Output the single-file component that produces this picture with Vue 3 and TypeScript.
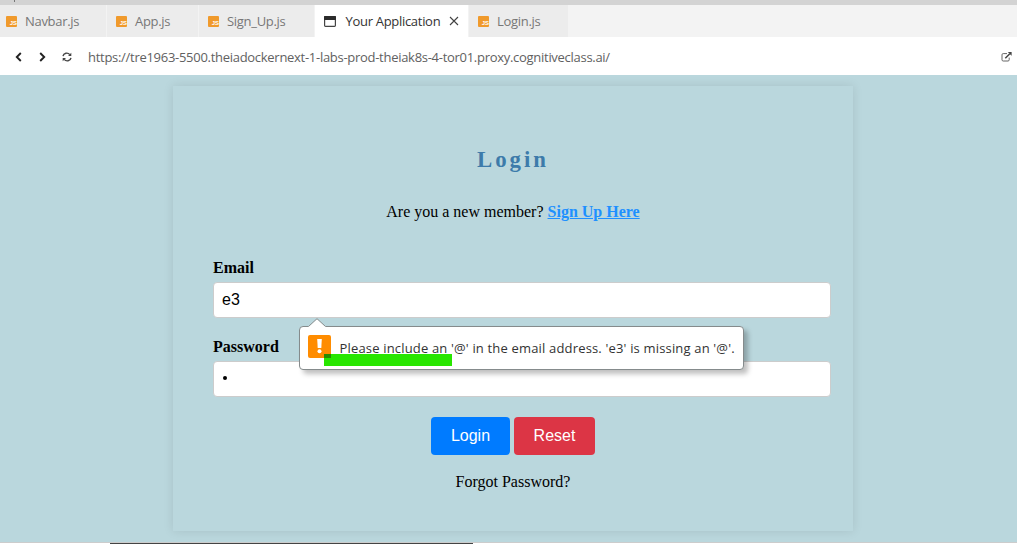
<script setup lang="ts">
import { ref } from 'vue'

interface Tab {
  name: string
  width: number
  active?: boolean
}

const tabs: Tab[] = [
  { name: 'Navbar.js', width: 107 },
  { name: 'App.js', width: 92 },
  { name: 'Sign_Up.js', width: 116 },
  { name: 'Your Application', width: 154, active: true },
  { name: 'Login.js', width: 100 },
]
const url = 'https://tre1963-5500.theiadockernext-1-labs-prod-theiak8s-4-tor01.proxy.cognitiveclass.ai/'
const email = ref('e3')
</script>

<template>
  <div class="window">
    <div class="strip"><i class="tick"></i></div>
    <div class="tabs">
      <div v-for="t in tabs" :key="t.name" class="tab" :class="{ active: t.active }" :style="{ width: t.width + 'px' }">
        <svg v-if="t.active" class="winicon" width="12" height="11" viewBox="0 0 12 11">
          <rect x=".6" y=".6" width="10.8" height="9.8" rx=".8" fill="#fff" stroke="#444" stroke-width="1.2" />
          <rect x="0" y="0" width="12" height="4" rx=".8" fill="#2b2b2b" />
        </svg>
        <span v-else class="js">JS</span>
        <span class="name">{{ t.name }}</span>
        <svg v-if="t.active" class="close" width="10" height="10" viewBox="0 0 10 10">
          <path d="M1 1L9 9M9 1L1 9" stroke="#424242" stroke-width="1.1" fill="none" />
        </svg>
      </div>
    </div>
    <div class="toolbar">
      <svg class="back" width="7" height="10" viewBox="0 0 7 10"><path d="M5.8 1L1.8 5L5.8 9" fill="none" stroke="#222" stroke-width="1.9" /></svg>
      <svg class="fwd" width="7" height="10" viewBox="0 0 7 10"><path d="M1.2 1L5.2 5L1.2 9" fill="none" stroke="#222" stroke-width="1.9" /></svg>
      <svg class="reload" width="10" height="10" viewBox="0 0 10 10">
        <path d="M1 4.2C1.6 .8 5.8 .2 7.8 2.6M9 5.8C8.4 9.2 4.2 9.8 2.2 7.4" fill="none" stroke="#444" stroke-width="1.4" />
        <path d="M9.3 .8V4.1H6ZM.7 9.2V5.9H4Z" fill="#444" />
      </svg>
      <span class="url">{{ url }}</span>
      <svg class="open" width="11" height="10" viewBox="0 0 11 10">
        <path d="M6 1.6H2.2Q1 1.6 1 2.8V7.8Q1 9 2.2 9H7Q8.2 9 8.2 7.8V5.6" fill="none" stroke="#666" stroke-width="1" />
        <path d="M4.3 6.2L8.8 1.8" stroke="#444" stroke-width="1.5" />
        <path d="M6.8 0H10.6V3.8Z" fill="#444" />
      </svg>
    </div>
    <main class="page">
      <form class="card" novalidate @submit.prevent>
        <h2>Login</h2>
        <p class="member">Are you a new member? <a href="#">Sign Up Here</a></p>
        <label for="email">Email</label>
        <div class="field">
          <input id="email" v-model="email" type="text" />
          <div class="popup">
            <svg class="arrow" width="18" height="9" viewBox="0 0 18 9">
              <path d="M0 9L9 .7L18 9Z" fill="#fff" />
              <path d="M.5 8.5L9 .7L17.5 8.5" fill="none" stroke="#858b8c" />
            </svg>
            <span class="warn"><svg width="23" height="23" viewBox="0 0 23 23"><path d="M9.2 4H13.8L13.3 13H9.7Z" fill="#fff" /><circle cx="11.5" cy="16.2" r="2" fill="#fff" /></svg></span>
            <i class="marker"></i>
            <span class="message">Please include an '@' in the email address. 'e3' is missing an '@'.</span>
          </div>
        </div>
        <label for="password">Password</label>
        <div class="field"><div id="password" class="input" tabindex="0"><i class="dot"></i></div></div>
        <div class="buttons">
          <button class="login" type="submit">Login</button>
          <button class="reset" type="reset">Reset</button>
        </div>
        <p class="forgot">Forgot Password?</p>
      </form>
    </main>
    <div class="bottom"><i></i></div>
  </div>
</template>

<style>
html, body { background: #fff; overflow: hidden; }
</style>

<style scoped>
* { box-sizing: border-box; }
.window { width: 1017px; height: 547px; display: flex; flex-direction: column; overflow: hidden; background: #fff; }
.strip { height: 5px; flex: none; background: #d3d3d3; }
.tick { display: block; width: 1px; height: 2px; margin-left: 14px; background: #777; }
.tabs { height: 32px; flex: none; display: flex; background: #f3f3f3; }
.tab { height: 32px; flex: none; display: flex; align-items: center; padding-left: 6px; background: #ececec; border-right: 1px solid #f3f3f3; color: #777; font: 13px/20px "Open Sans", "Noto Sans", sans-serif; }
.tab + .tab { padding-left: 9px; }
.tab.active { background: #fff; color: #333; }
.js { width: 11px; height: 11px; flex: none; margin-top: 1px; border-radius: 1px; background: #f09a2c; color: #fff; font: bold 6px/15px "Liberation Sans", Arial, sans-serif; text-align: right; }
.name { margin-left: 8px; letter-spacing: -.3px; white-space: nowrap; }
.active .name { margin-left: 9.5px; }
.winicon, .close { flex: none; }
.close { margin-left: 8.5px; }
.toolbar { height: 38px; flex: none; display: flex; align-items: center; padding: 2px 5px 0 15px; background: #fff; }
.toolbar svg { flex: none; }
.fwd { margin-left: 17px; }
.reload { margin-left: 16px; }
.url { margin-left: 16px; color: #616161; font: 13px/20px "Open Sans", "Noto Sans", sans-serif; letter-spacing: -.285px; white-space: nowrap; }
.open { margin-left: auto; }
.page { height: 467px; flex: none; padding-top: 11px; background: #bad7dd; overflow: hidden; }
.card { width: 680px; height: 445px; margin-left: 173px; padding: 60px 40px 0; display: flex; flex-direction: column; box-shadow: 0 0 10px rgba(0, 0, 0, .1); color: #000; font: 16px/18px "Liberation Serif", "Times New Roman", serif; }
h2 { margin: 0; height: 28px; color: #3d7baa; font-size: 22.8px; line-height: 28px; letter-spacing: 3px; text-align: center; }
p { margin: 0; text-align: center; }
.member { margin: 29px 0 38px; }
a { color: #1e90ff; font-weight: bold; text-decoration: underline; }
label { font-weight: bold; }
.field { position: relative; width: 618px; height: 36px; margin: 5px 0 20px; }
input, .input { display: block; width: 618px; height: 36px; margin: 0; padding: 0 8px; border: 1px solid #ccc; border-radius: 4px; background: #fff; color: #000; font: 16px/34px "Liberation Sans", Arial, sans-serif; outline: none; }
.dot { display: block; width: 4px; height: 4px; margin: 14px 0 0 1px; border-radius: 50%; background: #000; }
.popup { position: absolute; z-index: 2; left: 86px; top: 44px; width: 445px; height: 44px; display: flex; align-items: center; padding-left: 8px; border: 1px solid #858b8c; border-radius: 4px; background: #fff; box-shadow: 4px 4px 5px rgba(0, 0, 0, .25); }
.arrow { position: absolute; left: 8px; top: -9px; }
.warn { width: 23px; height: 23px; flex: none; margin-top: -3px; border-radius: 2px; background: #ff8c00; }
.warn svg { display: block; }
.marker { position: absolute; left: 24px; top: 27px; width: 128px; height: 12px; background: linear-gradient(90deg, #288c00 0 7px, transparent 7px) 0 0 / 100% 4px no-repeat, #28e600; }
.message { position: relative; margin-left: 8.5px; color: #333; font: 13px/20px "Open Sans", "Noto Sans", sans-serif; letter-spacing: .17px; white-space: nowrap; }
.buttons { display: flex; justify-content: center; gap: 4px; height: 38px; }
button { height: 38px; border: 0; padding: 0; border-radius: 4px; color: #fff; font: 16px/38px "Liberation Sans", Arial, sans-serif; }
.login { width: 79px; background: #007bff; }
.reset { width: 81px; background: #dc3545; }
.forgot { margin-top: 18px; }
.bottom { flex: none; height: 5px; border-top: 1px solid #ccc; }
.bottom i { display: block; width: 363px; height: 1px; margin-left: 110px; background: #444; }
</style>
